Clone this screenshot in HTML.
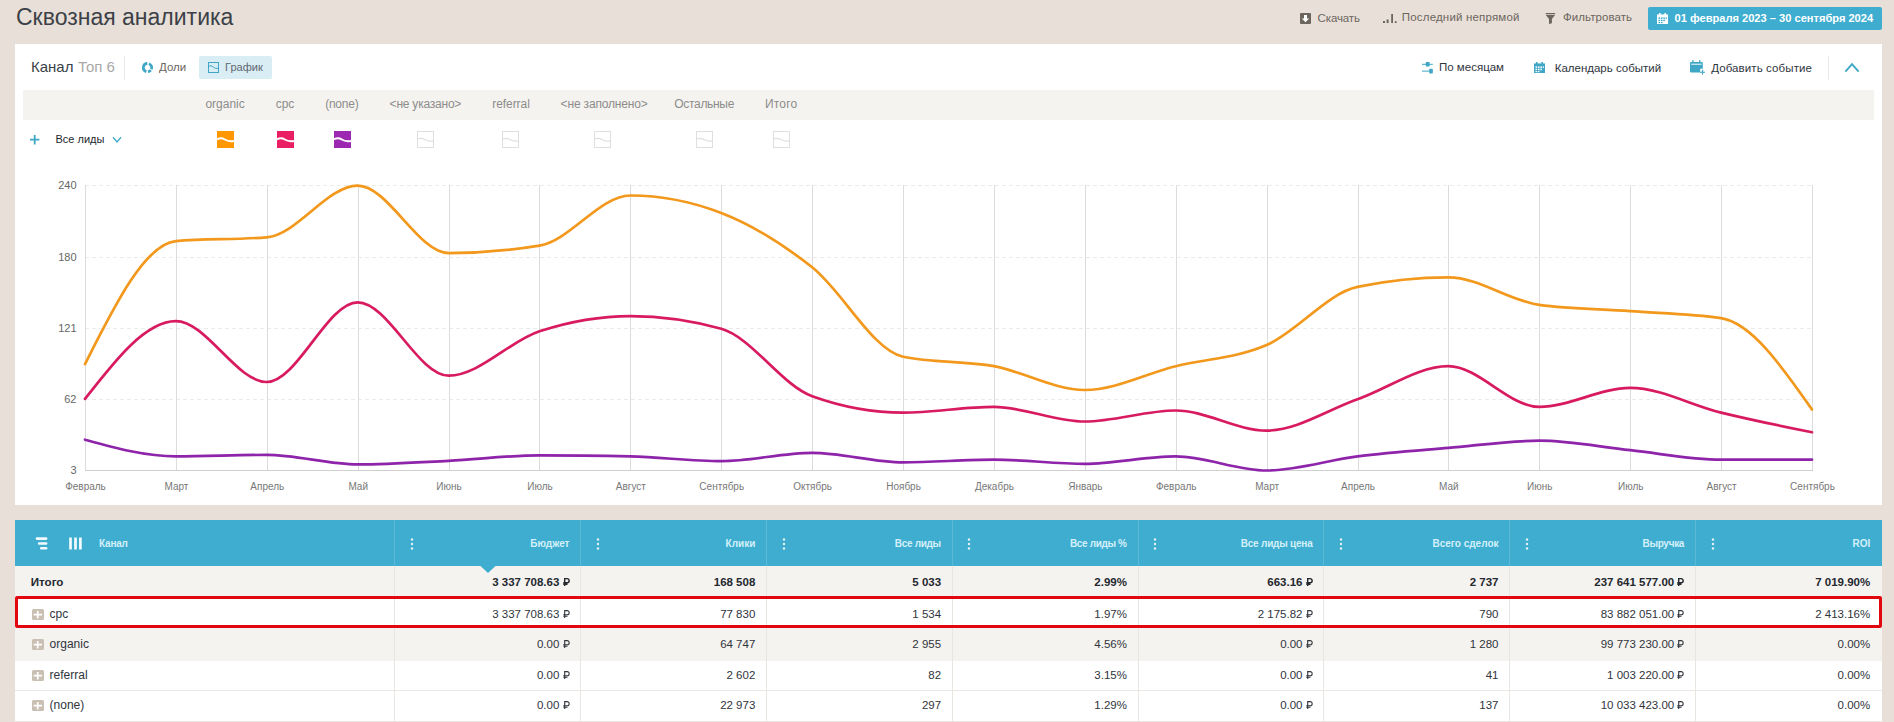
<!DOCTYPE html>
<html lang="ru"><head><meta charset="utf-8"><title>Сквозная аналитика</title>
<style>
html,body{margin:0;padding:0}
body{width:1894px;height:722px;overflow:hidden;background:#e8e0d8;font-family:"Liberation Sans",sans-serif;position:relative}
.t{position:absolute;line-height:1;white-space:nowrap}
.b{position:absolute;display:block}
.rub{display:inline-block;vertical-align:baseline;overflow:visible}
</style></head><body>
<div class="t" style="left:16px;top:6px;font-size:23px;color:#3c4047;">Сквозная аналитика</div>
<svg class="b" style="left:1300px;top:13px;" width="11" height="11" viewBox="0 0 11 11"><rect width="11" height="11" rx="1" fill="#6c655e"/><path d="M4 2h3v3.5h2.2L5.5 9.3 1.8 5.5H4z" fill="#fff"/></svg>
<div class="t" style="left:1317.6px;top:13px;font-size:11.5px;color:#6c655e;letter-spacing:-0.13px;">Скачать</div>
<svg class="b" style="left:1383px;top:13px;" width="14" height="11" viewBox="0 0 14 11"><g fill="#6c655e"><rect x="0" y="8" width="2" height="2"/><rect x="3.6" y="6.5" width="2" height="3.5"/><rect x="8.2" y="1" width="1.8" height="9"/><rect x="11.8" y="8.2" width="1.8" height="1.8"/></g></svg>
<div class="t" style="left:1401.8px;top:12px;font-size:11.5px;color:#6c655e;letter-spacing:0.18px;">Последний непрямой</div>
<svg class="b" style="left:1545px;top:13px;" width="11" height="11" viewBox="0 0 11 11"><g fill="#6c655e"><rect x="0.6" y="0" width="9.6" height="1"/><path d="M0.6 1.8h9.6L6.9 6v4.2L4 11V6z"/></g></svg>
<div class="t" style="left:1562.9px;top:12px;font-size:11.5px;color:#6c655e;letter-spacing:0.08px;">Фильтровать</div>
<div class="b" style="left:1648px;top:7px;width:234px;height:23px;background:#3eadcf;border-radius:2px"></div>
<svg class="b" style="left:1657px;top:13px;" width="11" height="11" viewBox="0 0 11 11"><g fill="#fff"><rect x="2" y="0" width="1.6" height="2.4"/><rect x="7.4" y="0" width="1.6" height="2.4"/><path d="M0 1.4h11v9.6h-11z"/></g><g fill="#3eadcf"><rect x="1.6" y="0.6" width="2.4" height="2.6" opacity="0"/><rect x="1.5" y="4.4" width="1.6" height="1.5"/><rect x="3.9" y="4.4" width="1.6" height="1.5"/><rect x="6.3" y="4.4" width="1.6" height="1.5"/><rect x="8.7" y="4.4" width="1.2" height="1.5"/><rect x="1.5" y="6.7" width="1.6" height="1.5"/><rect x="3.9" y="6.7" width="1.6" height="1.5"/><rect x="6.3" y="6.7" width="1.6" height="1.5"/><rect x="1.5" y="9" width="1.6" height="1.2"/><rect x="3.9" y="9" width="1.6" height="1.2"/></g></svg>
<div class="t" style="left:1674.5px;top:13px;font-size:11.1px;color:#fff;font-weight:700;">01 февраля 2023 – 30 сентября 2024</div>
<div class="b" style="left:15px;top:44px;width:1867px;height:461px;background:#fff;"></div>
<div class="t" style="left:31px;top:59px;font-size:15px;color:#3a3f47;">Канал</div>
<div class="t" style="left:78px;top:59px;font-size:15px;color:#a8a8a8;">Топ 6</div>
<div class="b" style="left:124px;top:56px;width:1px;height:23.5px;background:#e8e8e8;"></div>
<svg class="b" style="left:142px;top:62px;" width="12" height="12" viewBox="0 0 12 12"><path d="M4.36 9.59A4.15 4.15 0 0 1 5.36 1.45M6.92 1.70A4.15 4.15 0 0 1 9.35 7.15M8.77 8.15A4.15 4.15 0 0 1 5.93 9.73" fill="none" stroke="#3fa7c5" stroke-width="2.7"/></svg>
<div class="t" style="left:159px;top:62px;font-size:11.5px;color:#6b655f;">Доли</div>
<div class="b" style="left:199px;top:56px;width:73px;height:23px;background:#d9edf5;border-radius:2px"></div>
<svg class="b" style="left:208px;top:62px;" width="11" height="11" viewBox="0 0 11 11"><g fill="none" stroke="#3fa7c5" stroke-width="1"><rect x="0.5" y="0.5" width="10" height="10"/><path d="M0.5 4.6C2.5 3.4 3.6 3.6 5.2 5 6.8 6.4 8.4 6.6 10.5 6.2"/></g></svg>
<div class="t" style="left:225px;top:62px;font-size:11.1px;color:#5f6670;">График</div>
<svg class="b" style="left:1422px;top:62px;" width="11" height="12" viewBox="0 0 11 12"><g fill="#3fa7c5"><rect x="0" y="1.8" width="10.8" height="1"/><rect x="3.8" y="0" width="3.8" height="4.6" rx="0.6"/><rect x="0" y="8.6" width="10.8" height="1"/><rect x="7.2" y="6.8" width="3.6" height="4.6" rx="0.6"/></g></svg>
<div class="t" style="left:1439px;top:62px;font-size:11.5px;color:#2f353d;">По месяцам</div>
<svg class="b" style="left:1534px;top:62px;" width="11" height="11" viewBox="0 0 11 11"><g fill="#3fa7c5"><rect x="2" y="0" width="1.6" height="2.4"/><rect x="7.4" y="0" width="1.6" height="2.4"/><path d="M0 1.4h11v9.6h-11z"/></g><g fill="#fff"><rect x="1.6" y="0.6" width="2.4" height="2.6" opacity="0"/><rect x="1.5" y="4.4" width="1.6" height="1.5"/><rect x="3.9" y="4.4" width="1.6" height="1.5"/><rect x="6.3" y="4.4" width="1.6" height="1.5"/><rect x="8.7" y="4.4" width="1.2" height="1.5"/><rect x="1.5" y="6.7" width="1.6" height="1.5"/><rect x="3.9" y="6.7" width="1.6" height="1.5"/><rect x="6.3" y="6.7" width="1.6" height="1.5"/><rect x="1.5" y="9" width="1.6" height="1.2"/><rect x="3.9" y="9" width="1.6" height="1.2"/></g></svg>
<div class="t" style="left:1554.7px;top:63px;font-size:11.5px;color:#2f353d;">Календарь событий</div>
<svg class="b" style="left:1690px;top:60px;" width="15" height="15" viewBox="0 0 15 15"><g fill="#3fa7c5"><rect x="2.2" y="0.2" width="1.4" height="2.6"/><rect x="9" y="0.2" width="1.4" height="2.6"/><path d="M0 3.2a1.2 1.2 0 0 1 1.2-1.2h10.4a1.2 1.2 0 0 1 1.2 1.2v5.6h-2.6v3.6H1.2A1.2 1.2 0 0 1 0 11.2z"/><rect x="12" y="9.8" width="1.1" height="4.8"/><rect x="10.1" y="11.7" width="4.8" height="1.1"/></g><rect x="1.2" y="3.6" width="10.4" height="1.4" fill="#bfe3ee"/></svg>
<div class="t" style="left:1711.2px;top:63px;font-size:11.5px;color:#2f353d;letter-spacing:0.1px;">Добавить событие</div>
<div class="b" style="left:1828px;top:56px;width:1px;height:23.5px;background:#e8e8e8;"></div>
<svg class="b" style="left:1844px;top:62px;" width="16" height="11" viewBox="0 0 16 11"><path d="M1.4 9.6 8 2.2l6.6 7.4" fill="none" stroke="#3fa7c5" stroke-width="1.9"/></svg>
<div class="b" style="left:23px;top:90px;width:1851px;height:30px;background:#f5f3ef;"></div>
<div class="t" style="left:25.099999999999994px;width:400px;text-align:center;top:98px;font-size:12px;color:#8c8c8c;">organic</div>
<div class="t" style="left:85.0px;width:400px;text-align:center;top:98px;font-size:12px;color:#8c8c8c;">cpc</div>
<div class="t" style="left:141.8px;width:400px;text-align:center;top:98px;font-size:12px;color:#8c8c8c;letter-spacing:-0.23px;">(none)</div>
<div class="t" style="left:225.39999999999998px;width:400px;text-align:center;top:98px;font-size:12px;color:#8c8c8c;letter-spacing:-0.22px;">&lt;не указано&gt;</div>
<div class="t" style="left:311.0px;width:400px;text-align:center;top:98px;font-size:12px;color:#8c8c8c;letter-spacing:-0.05px;">referral</div>
<div class="t" style="left:404.1px;width:400px;text-align:center;top:98px;font-size:12px;color:#8c8c8c;letter-spacing:-0.17px;">&lt;не заполнено&gt;</div>
<div class="t" style="left:504.20000000000005px;width:400px;text-align:center;top:98px;font-size:12px;color:#8c8c8c;letter-spacing:-0.32px;">Остальные</div>
<div class="t" style="left:581.2px;width:400px;text-align:center;top:98px;font-size:12px;color:#8c8c8c;letter-spacing:0.2px;">Итого</div>
<svg class="b" style="left:30px;top:135px;" width="10" height="10" viewBox="0 0 10 10"><path d="M4.7 0v9.4M0 4.7h9.4" stroke="#3fa7c5" stroke-width="1.8" fill="none"/></svg>
<div class="t" style="left:55.5px;top:134px;font-size:11px;color:#23272e;">Все лиды</div>
<svg class="b" style="left:112px;top:136px;" width="10" height="8" viewBox="0 0 10 8"><path d="M1 1.3 5 5.9 9 1.3" fill="none" stroke="#3fa7c5" stroke-width="1.3"/></svg>
<svg class="b" style="left:217.3px;top:131px;" width="17" height="17" viewBox="0 0 17 17"><rect width="17" height="17" fill="#ff9800"/><path d="M0 8.3C3 6.8 5.2 6.9 7.8 8.5 10.6 10.3 13.4 10.5 17 9.9" fill="none" stroke="#fff" stroke-width="2"/></svg>
<svg class="b" style="left:277.3px;top:131px;" width="17" height="17" viewBox="0 0 17 17"><rect width="17" height="17" fill="#e91e63"/><path d="M0 8.3C3 6.8 5.2 6.9 7.8 8.5 10.6 10.3 13.4 10.5 17 9.9" fill="none" stroke="#fff" stroke-width="2"/></svg>
<svg class="b" style="left:333.5px;top:131px;" width="17" height="17" viewBox="0 0 17 17"><rect width="17" height="17" fill="#9c27b0"/><path d="M0 8.3C3 6.8 5.2 6.9 7.8 8.5 10.6 10.3 13.4 10.5 17 9.9" fill="none" stroke="#fff" stroke-width="2"/></svg>
<svg class="b" style="left:417px;top:131px;" width="17" height="17" viewBox="0 0 17 17"><rect x="0.5" y="0.5" width="16" height="16" fill="none" stroke="#dfdfdf"/><path d="M0 8.3C3 6.8 5.2 6.9 7.8 8.5 10.6 10.3 13.4 10.5 17 9.9" fill="none" stroke="#dfdfdf" stroke-width="1.2"/></svg>
<svg class="b" style="left:502.2px;top:131px;" width="17" height="17" viewBox="0 0 17 17"><rect x="0.5" y="0.5" width="16" height="16" fill="none" stroke="#dfdfdf"/><path d="M0 8.3C3 6.8 5.2 6.9 7.8 8.5 10.6 10.3 13.4 10.5 17 9.9" fill="none" stroke="#dfdfdf" stroke-width="1.2"/></svg>
<svg class="b" style="left:594px;top:131px;" width="17" height="17" viewBox="0 0 17 17"><rect x="0.5" y="0.5" width="16" height="16" fill="none" stroke="#dfdfdf"/><path d="M0 8.3C3 6.8 5.2 6.9 7.8 8.5 10.6 10.3 13.4 10.5 17 9.9" fill="none" stroke="#dfdfdf" stroke-width="1.2"/></svg>
<svg class="b" style="left:696px;top:131px;" width="17" height="17" viewBox="0 0 17 17"><rect x="0.5" y="0.5" width="16" height="16" fill="none" stroke="#dfdfdf"/><path d="M0 8.3C3 6.8 5.2 6.9 7.8 8.5 10.6 10.3 13.4 10.5 17 9.9" fill="none" stroke="#dfdfdf" stroke-width="1.2"/></svg>
<svg class="b" style="left:773.2px;top:131px;" width="17" height="17" viewBox="0 0 17 17"><rect x="0.5" y="0.5" width="16" height="16" fill="none" stroke="#dfdfdf"/><path d="M0 8.3C3 6.8 5.2 6.9 7.8 8.5 10.6 10.3 13.4 10.5 17 9.9" fill="none" stroke="#dfdfdf" stroke-width="1.2"/></svg>
<svg class="b" style="left:0;top:0" width="1894" height="510" viewBox="0 0 1894 510"><path d="M85.0 185.5H1812.0" stroke="#ebebeb" stroke-dasharray="4 3" fill="none"/><path d="M85.0 257.5H1812.0" stroke="#ebebeb" stroke-dasharray="4 3" fill="none"/><path d="M85.0 328.5H1812.0" stroke="#ebebeb" stroke-dasharray="4 3" fill="none"/><path d="M85.0 399.5H1812.0" stroke="#ebebeb" stroke-dasharray="4 3" fill="none"/><path d="M85.5 185V470.5" stroke="#dcdcdc" fill="none"/><path d="M176.5 185V470.5" stroke="#dcdcdc" fill="none"/><path d="M267.5 185V470.5" stroke="#dcdcdc" fill="none"/><path d="M358.5 185V470.5" stroke="#dcdcdc" fill="none"/><path d="M449.5 185V470.5" stroke="#dcdcdc" fill="none"/><path d="M539.5 185V470.5" stroke="#dcdcdc" fill="none"/><path d="M630.5 185V470.5" stroke="#dcdcdc" fill="none"/><path d="M721.5 185V470.5" stroke="#dcdcdc" fill="none"/><path d="M812.5 185V470.5" stroke="#dcdcdc" fill="none"/><path d="M903.5 185V470.5" stroke="#dcdcdc" fill="none"/><path d="M994.5 185V470.5" stroke="#dcdcdc" fill="none"/><path d="M1085.5 185V470.5" stroke="#dcdcdc" fill="none"/><path d="M1176.5 185V470.5" stroke="#dcdcdc" fill="none"/><path d="M1267.5 185V470.5" stroke="#dcdcdc" fill="none"/><path d="M1358.5 185V470.5" stroke="#dcdcdc" fill="none"/><path d="M1448.5 185V470.5" stroke="#dcdcdc" fill="none"/><path d="M1539.5 185V470.5" stroke="#dcdcdc" fill="none"/><path d="M1630.5 185V470.5" stroke="#dcdcdc" fill="none"/><path d="M1721.5 185V470.5" stroke="#dcdcdc" fill="none"/><path d="M1812.5 185V470.5" stroke="#dcdcdc" fill="none"/><path d="M85.0 470.5H1813.0" stroke="#cfcfcf" fill="none"/><path d="M85.0 439.7C115.3 448.0 145.6 456.4 175.9 456.4C206.2 456.4 236.5 454.9 266.8 454.9C297.1 454.9 327.4 464.4 357.7 464.4C388.0 464.4 418.3 462.3 448.6 460.8C478.9 459.3 509.2 455.3 539.5 455.3C569.8 455.3 600.1 455.7 630.4 456.4C660.7 457.1 691.0 461.2 721.3 461.2C751.6 461.2 781.9 452.8 812.2 452.8C842.5 452.8 872.8 462.3 903.1 462.3C933.4 462.3 963.6 459.7 993.9 459.7C1024.2 459.7 1054.5 463.8 1084.8 463.8C1115.1 463.8 1145.4 456.4 1175.7 456.4C1206.0 456.4 1236.3 470.5 1266.6 470.5C1296.9 470.5 1327.2 460.2 1357.5 456.4C1387.8 452.6 1418.1 450.5 1448.4 447.9C1478.7 445.3 1509.0 440.7 1539.3 440.7C1569.6 440.7 1599.9 447.0 1630.2 450.2C1660.5 453.4 1690.8 459.7 1721.1 459.7C1751.4 459.7 1781.7 459.7 1812.0 459.7" fill="none" stroke="#8e24aa" stroke-width="2.7" stroke-linecap="round" stroke-linejoin="round"/><path d="M85.0 398.9C115.3 360.0 145.6 321.1 175.9 321.1C206.2 321.1 236.5 382.0 266.8 382.0C297.1 382.0 327.4 302.3 357.7 302.3C388.0 302.3 418.3 375.7 448.6 375.7C478.9 375.7 509.2 341.2 539.5 331.3C569.8 321.4 600.1 316.1 630.4 316.1C660.7 316.1 691.0 320.3 721.3 328.8C751.6 337.3 781.9 385.3 812.2 396.2C842.5 407.1 872.8 412.6 903.1 412.6C933.4 412.6 963.6 406.9 993.9 406.9C1024.2 406.9 1054.5 421.5 1084.8 421.5C1115.1 421.5 1145.4 410.5 1175.7 410.5C1206.0 410.5 1236.3 430.6 1266.6 430.6C1296.9 430.6 1327.2 410.0 1357.5 399.3C1387.8 388.6 1418.1 366.2 1448.4 366.2C1478.7 366.2 1509.0 406.9 1539.3 406.9C1569.6 406.9 1599.9 387.9 1630.2 387.9C1660.5 387.9 1690.8 405.2 1721.1 412.6C1751.4 420.0 1781.7 426.2 1812.0 432.3" fill="none" stroke="#d81b60" stroke-width="2.7" stroke-linecap="round" stroke-linejoin="round"/><path d="M85.0 364.1C115.3 303.9 145.6 243.6 175.9 241.1C206.2 238.6 236.5 239.8 266.8 237.3C297.1 234.8 327.4 185.6 357.7 185.6C388.0 185.6 418.3 253.1 448.6 253.1C478.9 253.1 509.2 250.6 539.5 245.7C569.8 240.8 600.1 195.5 630.4 195.5C660.7 195.5 691.0 201.3 721.3 213.0C751.6 224.7 781.9 243.4 812.2 267.3C842.5 291.2 872.8 350.4 903.1 356.7C933.4 363.0 963.6 360.6 993.9 366.2C1024.2 371.8 1054.5 390.0 1084.8 390.0C1115.1 390.0 1145.4 373.7 1175.7 366.2C1206.0 358.7 1236.3 358.3 1266.6 345.1C1296.9 331.9 1327.2 293.2 1357.5 286.9C1387.8 280.6 1418.1 277.4 1448.4 277.4C1478.7 277.4 1509.0 300.7 1539.3 304.9C1569.6 309.1 1599.9 309.0 1630.2 311.2C1660.5 313.4 1690.8 313.5 1721.1 318.2C1751.4 322.9 1781.7 366.2 1812.0 409.5" fill="none" stroke="#f2981c" stroke-width="2.7" stroke-linecap="round" stroke-linejoin="round"/></svg>
<div class="t" style="right:1817.5px;top:180px;font-size:11px;color:#666;">240</div>
<div class="t" style="right:1817.5px;top:252px;font-size:11px;color:#666;">180</div>
<div class="t" style="right:1817.5px;top:323px;font-size:11px;color:#666;">121</div>
<div class="t" style="right:1817.5px;top:394px;font-size:11px;color:#666;">62</div>
<div class="t" style="right:1817.5px;top:465px;font-size:11px;color:#666;">3</div>
<div class="t" style="left:-114.5px;width:400px;text-align:center;top:482px;font-size:10px;color:#777;">Февраль</div>
<div class="t" style="left:-23.60526315789474px;width:400px;text-align:center;top:482px;font-size:10px;color:#777;">Март</div>
<div class="t" style="left:67.28947368421052px;width:400px;text-align:center;top:482px;font-size:10px;color:#777;">Апрель</div>
<div class="t" style="left:158.18421052631578px;width:400px;text-align:center;top:482px;font-size:10px;color:#777;">Май</div>
<div class="t" style="left:249.07894736842104px;width:400px;text-align:center;top:482px;font-size:10px;color:#777;">Июнь</div>
<div class="t" style="left:339.97368421052624px;width:400px;text-align:center;top:482px;font-size:10px;color:#777;">Июль</div>
<div class="t" style="left:430.86842105263156px;width:400px;text-align:center;top:482px;font-size:10px;color:#777;">Август</div>
<div class="t" style="left:521.7631578947369px;width:400px;text-align:center;top:482px;font-size:10px;color:#777;">Сентябрь</div>
<div class="t" style="left:612.6578947368421px;width:400px;text-align:center;top:482px;font-size:10px;color:#777;">Октябрь</div>
<div class="t" style="left:703.5526315789473px;width:400px;text-align:center;top:482px;font-size:10px;color:#777;">Ноябрь</div>
<div class="t" style="left:794.4473684210526px;width:400px;text-align:center;top:482px;font-size:10px;color:#777;">Декабрь</div>
<div class="t" style="left:885.3421052631579px;width:400px;text-align:center;top:482px;font-size:10px;color:#777;">Январь</div>
<div class="t" style="left:976.2368421052631px;width:400px;text-align:center;top:482px;font-size:10px;color:#777;">Февраль</div>
<div class="t" style="left:1067.1315789473683px;width:400px;text-align:center;top:482px;font-size:10px;color:#777;">Март</div>
<div class="t" style="left:1158.0263157894738px;width:400px;text-align:center;top:482px;font-size:10px;color:#777;">Апрель</div>
<div class="t" style="left:1248.921052631579px;width:400px;text-align:center;top:482px;font-size:10px;color:#777;">Май</div>
<div class="t" style="left:1339.8157894736842px;width:400px;text-align:center;top:482px;font-size:10px;color:#777;">Июнь</div>
<div class="t" style="left:1430.7105263157894px;width:400px;text-align:center;top:482px;font-size:10px;color:#777;">Июль</div>
<div class="t" style="left:1521.6052631578946px;width:400px;text-align:center;top:482px;font-size:10px;color:#777;">Август</div>
<div class="t" style="left:1612.5px;width:400px;text-align:center;top:482px;font-size:10px;color:#777;">Сентябрь</div>
<div class="b" style="left:15px;top:520px;width:1867px;height:46px;background:#3eadcf;"></div>
<div class="b" style="left:15px;top:566px;width:1867px;height:30px;background:#f5f3ef;"></div>
<div class="b" style="left:15px;top:596px;width:1867px;height:32px;background:#fff;"></div>
<div class="b" style="left:15px;top:628px;width:1867px;height:33px;background:#f5f3ef;"></div>
<div class="b" style="left:15px;top:661px;width:1867px;height:30px;background:#fff;"></div>
<div class="b" style="left:15px;top:691px;width:1867px;height:31px;background:#fff;"></div>
<div class="b" style="left:15px;top:690px;width:1867px;height:1px;background:#ebe8e3;"></div>
<div class="b" style="left:15px;top:721px;width:1867px;height:1px;background:#ebe8e3;"></div>
<div class="b" style="left:394px;top:520px;width:1px;height:46px;background:#5cb9d6;"></div>
<div class="b" style="left:394px;top:566px;width:1px;height:156px;background:#e9e6e1;"></div>
<div class="b" style="left:580px;top:520px;width:1px;height:46px;background:#5cb9d6;"></div>
<div class="b" style="left:580px;top:566px;width:1px;height:156px;background:#e9e6e1;"></div>
<div class="b" style="left:766px;top:520px;width:1px;height:46px;background:#5cb9d6;"></div>
<div class="b" style="left:766px;top:566px;width:1px;height:156px;background:#e9e6e1;"></div>
<div class="b" style="left:952px;top:520px;width:1px;height:46px;background:#5cb9d6;"></div>
<div class="b" style="left:952px;top:566px;width:1px;height:156px;background:#e9e6e1;"></div>
<div class="b" style="left:1138px;top:520px;width:1px;height:46px;background:#5cb9d6;"></div>
<div class="b" style="left:1138px;top:566px;width:1px;height:156px;background:#e9e6e1;"></div>
<div class="b" style="left:1323px;top:520px;width:1px;height:46px;background:#5cb9d6;"></div>
<div class="b" style="left:1323px;top:566px;width:1px;height:156px;background:#e9e6e1;"></div>
<div class="b" style="left:1509px;top:520px;width:1px;height:46px;background:#5cb9d6;"></div>
<div class="b" style="left:1509px;top:566px;width:1px;height:156px;background:#e9e6e1;"></div>
<div class="b" style="left:1695px;top:520px;width:1px;height:46px;background:#5cb9d6;"></div>
<div class="b" style="left:1695px;top:566px;width:1px;height:156px;background:#e9e6e1;"></div>
<svg class="b" style="left:34px;top:536px;" width="16" height="16" viewBox="0 0 16 16"><g stroke="#f3fbfe" stroke-width="2.6" stroke-linecap="round" fill="none"><path d="M3 2.6H12.1"/><path d="M5.2 7.5H12.1"/><path d="M7.3 12.3H12.1"/></g></svg>
<svg class="b" style="left:68px;top:536px;" width="16" height="16" viewBox="0 0 16 16"><g stroke="#f3fbfe" stroke-width="2.7" stroke-linecap="butt" fill="none"><path d="M2.5 1.5V13.5"/><path d="M7.5 1.5V13.5"/><path d="M12.4 1.5V13.5"/></g></svg>
<div class="t" style="left:99px;top:539px;font-size:10px;color:#d3f0fa;font-weight:700;letter-spacing:-0.2px;">Канал</div>
<svg class="b" style="left:409.9px;top:538px;" width="4" height="12" viewBox="0 0 4 12"><g fill="#e4f4f9"><circle cx="2" cy="1.5" r="1.2"/><circle cx="2" cy="6" r="1.2"/><circle cx="2" cy="10.5" r="1.2"/></g></svg>
<div class="t" style="right:1324.5px;top:539px;font-size:10px;color:#d3f0fa;font-weight:700;">Бюджет</div>
<svg class="b" style="left:595.7px;top:538px;" width="4" height="12" viewBox="0 0 4 12"><g fill="#e4f4f9"><circle cx="2" cy="1.5" r="1.2"/><circle cx="2" cy="6" r="1.2"/><circle cx="2" cy="10.5" r="1.2"/></g></svg>
<div class="t" style="right:1138.7px;top:539px;font-size:10px;color:#d3f0fa;font-weight:700;">Клики</div>
<svg class="b" style="left:781.5px;top:538px;" width="4" height="12" viewBox="0 0 4 12"><g fill="#e4f4f9"><circle cx="2" cy="1.5" r="1.2"/><circle cx="2" cy="6" r="1.2"/><circle cx="2" cy="10.5" r="1.2"/></g></svg>
<div class="t" style="right:953.2px;top:539px;font-size:10px;color:#d3f0fa;font-weight:700;letter-spacing:-0.31px;">Все лиды</div>
<svg class="b" style="left:967.3px;top:538px;" width="4" height="12" viewBox="0 0 4 12"><g fill="#e4f4f9"><circle cx="2" cy="1.5" r="1.2"/><circle cx="2" cy="6" r="1.2"/><circle cx="2" cy="10.5" r="1.2"/></g></svg>
<div class="t" style="right:767.4000000000001px;top:539px;font-size:10px;color:#d3f0fa;font-weight:700;letter-spacing:-0.35px;">Все лиды %</div>
<svg class="b" style="left:1153.1px;top:538px;" width="4" height="12" viewBox="0 0 4 12"><g fill="#e4f4f9"><circle cx="2" cy="1.5" r="1.2"/><circle cx="2" cy="6" r="1.2"/><circle cx="2" cy="10.5" r="1.2"/></g></svg>
<div class="t" style="right:581.5px;top:539px;font-size:10px;color:#d3f0fa;font-weight:700;letter-spacing:-0.22px;">Все лиды цена</div>
<svg class="b" style="left:1338.9px;top:538px;" width="4" height="12" viewBox="0 0 4 12"><g fill="#e4f4f9"><circle cx="2" cy="1.5" r="1.2"/><circle cx="2" cy="6" r="1.2"/><circle cx="2" cy="10.5" r="1.2"/></g></svg>
<div class="t" style="right:395.5px;top:539px;font-size:10px;color:#d3f0fa;font-weight:700;">Всего сделок</div>
<svg class="b" style="left:1524.8px;top:538px;" width="4" height="12" viewBox="0 0 4 12"><g fill="#e4f4f9"><circle cx="2" cy="1.5" r="1.2"/><circle cx="2" cy="6" r="1.2"/><circle cx="2" cy="10.5" r="1.2"/></g></svg>
<div class="t" style="right:209.9000000000001px;top:539px;font-size:10px;color:#d3f0fa;font-weight:700;letter-spacing:-0.3px;">Выручка</div>
<svg class="b" style="left:1710.6px;top:538px;" width="4" height="12" viewBox="0 0 4 12"><g fill="#e4f4f9"><circle cx="2" cy="1.5" r="1.2"/><circle cx="2" cy="6" r="1.2"/><circle cx="2" cy="10.5" r="1.2"/></g></svg>
<div class="t" style="right:23.799999999999955px;top:539px;font-size:10px;color:#d3f0fa;font-weight:700;">ROI</div>
<svg class="b" style="left:480px;top:566px;" width="16" height="8" viewBox="0 0 16 8"><path d="M0.5 0h15L8 7z" fill="#3eadcf"/></svg>
<div class="t" style="left:30.7px;top:576px;font-size:11.6px;color:#24282f;font-weight:700;">Итого</div>
<div class="t" style="right:1324.5px;top:577px;font-size:11.5px;color:#24282f;font-weight:700;">3 337 708.63&nbsp;<svg class="rub" width="7" height="8" viewBox="0 0 7 8"><path d="M1.7 8V0.6h2.4a2.05 2.05 0 0 1 0 4.1H0.3M0.3 6.3h4.2" fill="none" stroke="currentColor" stroke-width="1.45"/></svg></div>
<div class="t" style="right:1138.7px;top:577px;font-size:11.5px;color:#24282f;font-weight:700;">168 508</div>
<div class="t" style="right:952.9px;top:577px;font-size:11.5px;color:#24282f;font-weight:700;">5 033</div>
<div class="t" style="right:767.0999999999999px;top:577px;font-size:11.5px;color:#24282f;font-weight:700;">2.99%</div>
<div class="t" style="right:581.3px;top:577px;font-size:11.5px;color:#24282f;font-weight:700;">663.16&nbsp;<svg class="rub" width="7" height="8" viewBox="0 0 7 8"><path d="M1.7 8V0.6h2.4a2.05 2.05 0 0 1 0 4.1H0.3M0.3 6.3h4.2" fill="none" stroke="currentColor" stroke-width="1.45"/></svg></div>
<div class="t" style="right:395.5px;top:577px;font-size:11.5px;color:#24282f;font-weight:700;">2 737</div>
<div class="t" style="right:209.5999999999999px;top:577px;font-size:11.5px;color:#24282f;font-weight:700;">237 641 577.00&nbsp;<svg class="rub" width="7" height="8" viewBox="0 0 7 8"><path d="M1.7 8V0.6h2.4a2.05 2.05 0 0 1 0 4.1H0.3M0.3 6.3h4.2" fill="none" stroke="currentColor" stroke-width="1.45"/></svg></div>
<div class="t" style="right:23.799999999999955px;top:577px;font-size:11.5px;color:#24282f;font-weight:700;">7 019.90%</div>
<svg class="b" style="left:32px;top:609px;" width="12" height="11" viewBox="0 0 12 11"><rect width="12" height="11" rx="1.5" fill="#c9c0b3"/><path d="M5.7 2v7.4M1.6 5.7h8.4" stroke="#fff" stroke-width="1.7" fill="none"/></svg>
<div class="t" style="left:49.6px;top:608px;font-size:12px;color:#30343c;">cpc</div>
<div class="t" style="right:1324.5px;top:609px;font-size:11.5px;color:#30343c;">3 337 708.63&nbsp;<svg class="rub" width="7" height="8" viewBox="0 0 7 8"><path d="M1.7 8V0.6h2.4a2.05 2.05 0 0 1 0 4.1H0.3M0.3 6.3h4.2" fill="none" stroke="currentColor" stroke-width="1.1"/></svg></div>
<div class="t" style="right:1138.7px;top:609px;font-size:11.5px;color:#30343c;">77 830</div>
<div class="t" style="right:952.9px;top:609px;font-size:11.5px;color:#30343c;">1 534</div>
<div class="t" style="right:767.0999999999999px;top:609px;font-size:11.5px;color:#30343c;">1.97%</div>
<div class="t" style="right:581.3px;top:609px;font-size:11.5px;color:#30343c;">2 175.82&nbsp;<svg class="rub" width="7" height="8" viewBox="0 0 7 8"><path d="M1.7 8V0.6h2.4a2.05 2.05 0 0 1 0 4.1H0.3M0.3 6.3h4.2" fill="none" stroke="currentColor" stroke-width="1.1"/></svg></div>
<div class="t" style="right:395.5px;top:609px;font-size:11.5px;color:#30343c;">790</div>
<div class="t" style="right:209.5999999999999px;top:609px;font-size:11.5px;color:#30343c;">83 882 051.00&nbsp;<svg class="rub" width="7" height="8" viewBox="0 0 7 8"><path d="M1.7 8V0.6h2.4a2.05 2.05 0 0 1 0 4.1H0.3M0.3 6.3h4.2" fill="none" stroke="currentColor" stroke-width="1.1"/></svg></div>
<div class="t" style="right:23.799999999999955px;top:609px;font-size:11.5px;color:#30343c;">2 413.16%</div>
<svg class="b" style="left:32px;top:639px;" width="12" height="11" viewBox="0 0 12 11"><rect width="12" height="11" rx="1.5" fill="#c9c0b3"/><path d="M5.7 2v7.4M1.6 5.7h8.4" stroke="#fff" stroke-width="1.7" fill="none"/></svg>
<div class="t" style="left:49.6px;top:638px;font-size:12px;color:#30343c;">organic</div>
<div class="t" style="right:1324.5px;top:639px;font-size:11.5px;color:#30343c;">0.00&nbsp;<svg class="rub" width="7" height="8" viewBox="0 0 7 8"><path d="M1.7 8V0.6h2.4a2.05 2.05 0 0 1 0 4.1H0.3M0.3 6.3h4.2" fill="none" stroke="currentColor" stroke-width="1.1"/></svg></div>
<div class="t" style="right:1138.7px;top:639px;font-size:11.5px;color:#30343c;">64 747</div>
<div class="t" style="right:952.9px;top:639px;font-size:11.5px;color:#30343c;">2 955</div>
<div class="t" style="right:767.0999999999999px;top:639px;font-size:11.5px;color:#30343c;">4.56%</div>
<div class="t" style="right:581.3px;top:639px;font-size:11.5px;color:#30343c;">0.00&nbsp;<svg class="rub" width="7" height="8" viewBox="0 0 7 8"><path d="M1.7 8V0.6h2.4a2.05 2.05 0 0 1 0 4.1H0.3M0.3 6.3h4.2" fill="none" stroke="currentColor" stroke-width="1.1"/></svg></div>
<div class="t" style="right:395.5px;top:639px;font-size:11.5px;color:#30343c;">1 280</div>
<div class="t" style="right:209.5999999999999px;top:639px;font-size:11.5px;color:#30343c;">99 773 230.00&nbsp;<svg class="rub" width="7" height="8" viewBox="0 0 7 8"><path d="M1.7 8V0.6h2.4a2.05 2.05 0 0 1 0 4.1H0.3M0.3 6.3h4.2" fill="none" stroke="currentColor" stroke-width="1.1"/></svg></div>
<div class="t" style="right:23.799999999999955px;top:639px;font-size:11.5px;color:#30343c;">0.00%</div>
<svg class="b" style="left:32px;top:670px;" width="12" height="11" viewBox="0 0 12 11"><rect width="12" height="11" rx="1.5" fill="#c9c0b3"/><path d="M5.7 2v7.4M1.6 5.7h8.4" stroke="#fff" stroke-width="1.7" fill="none"/></svg>
<div class="t" style="left:49.6px;top:669px;font-size:12px;color:#30343c;">referral</div>
<div class="t" style="right:1324.5px;top:670px;font-size:11.5px;color:#30343c;">0.00&nbsp;<svg class="rub" width="7" height="8" viewBox="0 0 7 8"><path d="M1.7 8V0.6h2.4a2.05 2.05 0 0 1 0 4.1H0.3M0.3 6.3h4.2" fill="none" stroke="currentColor" stroke-width="1.1"/></svg></div>
<div class="t" style="right:1138.7px;top:670px;font-size:11.5px;color:#30343c;">2 602</div>
<div class="t" style="right:952.9px;top:670px;font-size:11.5px;color:#30343c;">82</div>
<div class="t" style="right:767.0999999999999px;top:670px;font-size:11.5px;color:#30343c;">3.15%</div>
<div class="t" style="right:581.3px;top:670px;font-size:11.5px;color:#30343c;">0.00&nbsp;<svg class="rub" width="7" height="8" viewBox="0 0 7 8"><path d="M1.7 8V0.6h2.4a2.05 2.05 0 0 1 0 4.1H0.3M0.3 6.3h4.2" fill="none" stroke="currentColor" stroke-width="1.1"/></svg></div>
<div class="t" style="right:395.5px;top:670px;font-size:11.5px;color:#30343c;">41</div>
<div class="t" style="right:209.5999999999999px;top:670px;font-size:11.5px;color:#30343c;">1 003 220.00&nbsp;<svg class="rub" width="7" height="8" viewBox="0 0 7 8"><path d="M1.7 8V0.6h2.4a2.05 2.05 0 0 1 0 4.1H0.3M0.3 6.3h4.2" fill="none" stroke="currentColor" stroke-width="1.1"/></svg></div>
<div class="t" style="right:23.799999999999955px;top:670px;font-size:11.5px;color:#30343c;">0.00%</div>
<svg class="b" style="left:32px;top:700px;" width="12" height="11" viewBox="0 0 12 11"><rect width="12" height="11" rx="1.5" fill="#c9c0b3"/><path d="M5.7 2v7.4M1.6 5.7h8.4" stroke="#fff" stroke-width="1.7" fill="none"/></svg>
<div class="t" style="left:49.6px;top:699px;font-size:12px;color:#30343c;">(none)</div>
<div class="t" style="right:1324.5px;top:700px;font-size:11.5px;color:#30343c;">0.00&nbsp;<svg class="rub" width="7" height="8" viewBox="0 0 7 8"><path d="M1.7 8V0.6h2.4a2.05 2.05 0 0 1 0 4.1H0.3M0.3 6.3h4.2" fill="none" stroke="currentColor" stroke-width="1.1"/></svg></div>
<div class="t" style="right:1138.7px;top:700px;font-size:11.5px;color:#30343c;">22 973</div>
<div class="t" style="right:952.9px;top:700px;font-size:11.5px;color:#30343c;">297</div>
<div class="t" style="right:767.0999999999999px;top:700px;font-size:11.5px;color:#30343c;">1.29%</div>
<div class="t" style="right:581.3px;top:700px;font-size:11.5px;color:#30343c;">0.00&nbsp;<svg class="rub" width="7" height="8" viewBox="0 0 7 8"><path d="M1.7 8V0.6h2.4a2.05 2.05 0 0 1 0 4.1H0.3M0.3 6.3h4.2" fill="none" stroke="currentColor" stroke-width="1.1"/></svg></div>
<div class="t" style="right:395.5px;top:700px;font-size:11.5px;color:#30343c;">137</div>
<div class="t" style="right:209.5999999999999px;top:700px;font-size:11.5px;color:#30343c;">10 033 423.00&nbsp;<svg class="rub" width="7" height="8" viewBox="0 0 7 8"><path d="M1.7 8V0.6h2.4a2.05 2.05 0 0 1 0 4.1H0.3M0.3 6.3h4.2" fill="none" stroke="currentColor" stroke-width="1.1"/></svg></div>
<div class="t" style="right:23.799999999999955px;top:700px;font-size:11.5px;color:#30343c;">0.00%</div>
<div class="b" style="left:15px;top:596px;width:1861px;height:26px;border:3px solid #e2070f;border-radius:2px"></div>
</body></html>
